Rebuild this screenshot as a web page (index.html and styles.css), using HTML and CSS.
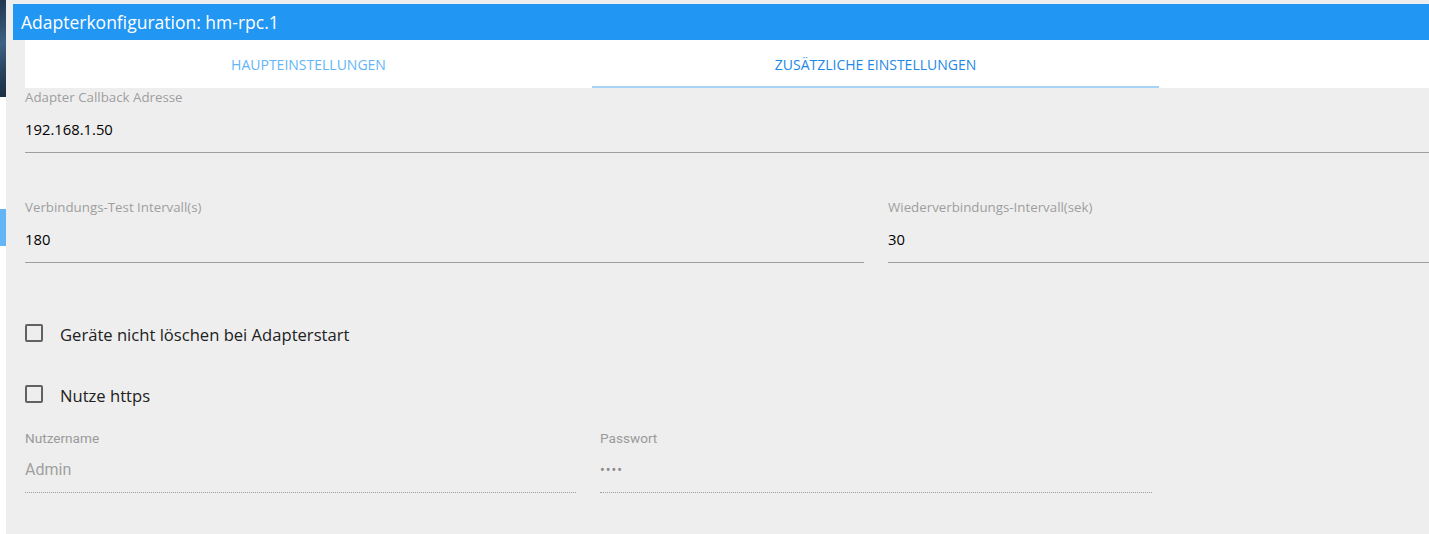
FILE: index.html
```html
<!DOCTYPE html>
<html lang="de">
<head>
<meta charset="utf-8">
<title>Adapterkonfiguration: hm-rpc.1</title>
<link rel="stylesheet" href="styles.css">
</head>
<body>
<div class="side">
  <div class="side-img"></div>
  <div class="side-gap"></div>
  <div class="side-mark"></div>
</div>
<div class="panel">
  <div class="header">Adapterkonfiguration: hm-rpc.1</div>
  <div class="content">
    <div class="tabs">
      <div class="tab">Haupteinstellungen</div>
      <div class="tab active">Zusätzliche Einstellungen</div>
    </div>
    <div class="form">
      <div class="field">
        <div class="label">Adapter Callback Adresse</div>
        <div class="value">192.168.1.50</div>
      </div>
      <div class="row row-wide">
        <div class="field">
          <div class="label">Verbindungs-Test Intervall(s)</div>
          <div class="value">180</div>
        </div>
        <div class="field">
          <div class="label">Wiederverbindungs-Intervall(sek)</div>
          <div class="value">30</div>
        </div>
      </div>
      <div class="check check-first">
        <span class="box"></span>
        <span class="check-label">Geräte nicht löschen bei Adapterstart</span>
      </div>
      <div class="check check-second">
        <span class="box"></span>
        <span class="check-label">Nutze https</span>
      </div>
      <div class="row row-half">
        <div class="field disabled">
          <div class="label">Nutzername</div>
          <div class="value">Admin</div>
        </div>
        <div class="field disabled">
          <div class="label">Passwort</div>
          <div class="value dots">••••</div>
        </div>
      </div>
    </div>
  </div>
</div>
</body>
</html>
```

FILE: styles.css
```css
html, body {
  margin: 0;
  padding: 0;
  height: 100%;
}
body {
  display: flex;
  background: #ffffff;
  overflow: hidden;
  font-family: "Open Sans", "Noto Sans", sans-serif;
}
.side {
  width: 6px;
  flex: 0 0 6px;
  display: flex;
  flex-direction: column;
}
.side-img {
  height: 97px;
  background: linear-gradient(160deg, #22364e 0%, #3d6284 45%, #27405c 75%, #1d2f45 100%);
}
.side-gap {
  height: 112px;
}
.side-mark {
  height: 37px;
  background: #64b5f6;
}
.panel {
  flex: 1;
  background: #eeeeee;
  padding: 4px 0 0 7px;
  min-width: 0;
}
.header {
  background: #2196f3;
  color: #ffffff;
  height: 36px;
  line-height: 36px;
  padding-left: 8px;
  font-size: 17.5px;
}
.content {
  padding-left: 12px;
}
.tabs {
  display: flex;
  background: #ffffff;
  height: 48px;
}
.tab {
  width: 567px;
  box-sizing: border-box;
  text-align: center;
  padding-top: 3px;
  line-height: 43px;
  border-bottom: 2px solid transparent;
  text-transform: uppercase;
  font-size: 14px;
  color: #64b5f6;
}
.tab.active {
  color: #1e88e5;
  border-bottom-color: #a6d3f8;
}
.form {
  padding-top: 1px;
}
.field {
  min-width: 0;
}
.label {
  font-size: 13.3px;
  line-height: 16px;
  color: #9e9e9e;
  white-space: nowrap;
}
.value {
  margin-top: 14px;
  font-size: 14.8px;
  line-height: 20px;
  color: #000000;
  padding-bottom: 13px;
  border-bottom: 1px solid #9e9e9e;
}
.row {
  display: grid;
  column-gap: 24px;
}
.row-wide {
  margin-top: 46px;
  grid-template-columns: 839px 1fr;
}
.check {
  display: flex;
  align-items: center;
  height: 24px;
}
.check-first {
  margin-top: 58px;
}
.check-second {
  margin-top: 37px;
}
.box {
  width: 18px;
  height: 18px;
  box-sizing: border-box;
  border: 2px solid #616161;
  border-radius: 2px;
  margin-right: 17px;
}
.check-label {
  font-size: 16.6px;
  color: #212121;
  position: relative;
  top: 1px;
}
.row-half {
  margin-top: 24px;
  grid-template-columns: 551px 552px;
}
.disabled .label {
  font-family: Roboto, "Liberation Sans", sans-serif;
  font-size: 13.6px;
  color: #9a9a9a;
}
.disabled .value {
  margin-top: 14px;
  font-family: Roboto, "Liberation Sans", sans-serif;
  font-size: 16px;
  color: #a0a0a0;
  padding-bottom: 12px;
  border-bottom: 1px dotted #9e9e9e;
}
.disabled .value.dots {
  font-size: 14px;
  letter-spacing: 1px;
  color: #8a8a8a;
}
```
